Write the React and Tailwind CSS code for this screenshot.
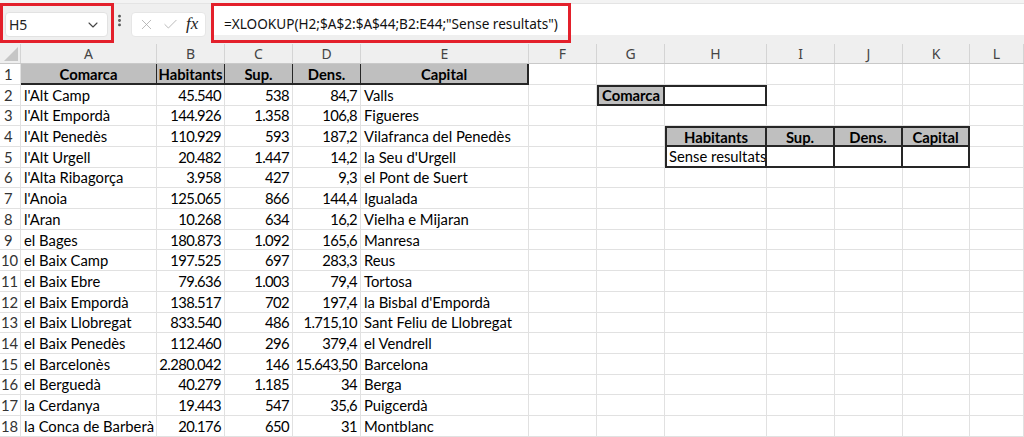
import { X, Check, ChevronDown, EllipsisVertical } from 'lucide-react'

const W = [
  'w-[21px]', 'w-[136px]', 'w-[68px]', 'w-[68px]', 'w-[68px]', 'w-[168px]',
  'w-[68px]', 'w-[68px]', 'w-[102px]', 'w-[68px]', 'w-[68px]', 'w-[67px]', 'w-[54px]',
]
const LETTERS = ['A', 'B', 'C', 'D', 'E', 'F', 'G', 'H', 'I', 'J', 'K', 'L']

const DATA = [
  ["l'Alt Camp", '45.540', '538', '84,7', 'Valls'],
  ["l'Alt Empordà", '144.926', '1.358', '106,8', 'Figueres'],
  ["l'Alt Penedès", '110.929', '593', '187,2', 'Vilafranca del Penedès'],
  ["l'Alt Urgell", '20.482', '1.447', '14,2', "la Seu d'Urgell"],
  ["l'Alta Ribagorça", '3.958', '427', '9,3', 'el Pont de Suert'],
  ["l'Anoia", '125.065', '866', '144,4', 'Igualada'],
  ["l'Aran", '10.268', '634', '16,2', 'Vielha e Mijaran'],
  ['el Bages', '180.873', '1.092', '165,6', 'Manresa'],
  ['el Baix Camp', '197.525', '697', '283,3', 'Reus'],
  ['el Baix Ebre', '79.636', '1.003', '79,4', 'Tortosa'],
  ['el Baix Empordà', '138.517', '702', '197,4', "la Bisbal d'Empordà"],
  ['el Baix Llobregat', '833.540', '486', '1.715,10', 'Sant Feliu de Llobregat'],
  ['el Baix Penedès', '112.460', '296', '379,4', 'el Vendrell'],
  ['el Barcelonès', '2.280.042', '146', '15.643,50', 'Barcelona'],
  ['el Berguedà', '40.279', '1.185', '34', 'Berga'],
  ['la Cerdanya', '19.443', '547', '35,6', 'Puigcerdà'],
  ['la Conca de Barberà', '20.176', '650', '31', 'Montblanc'],
]

const base = 'h-full shrink-0 flex items-center overflow-hidden whitespace-nowrap'
const grid = 'border-r border-b border-[#e1e1e1]'

// cell kinds: plain gridline cells, gray header of A1:E1, boxed cells of the lookup table
const STYLE = {
  plain: `${grid} px-[3px]`,
  num: `${grid} pl-[2px] pr-[3px] justify-end tracking-[-0.6px]`,
  head: 'bg-[#bfbfbf] border-r-[1.5px] border-b-2 border-[#262626] font-bold justify-center',
  headLast: 'bg-[#bfbfbf] border-r-2 border-b-2 border-[#262626] font-bold justify-center',
  boxFirst: 'bg-[#bfbfbf] border-2 border-[#262626] font-bold justify-center',
  boxNext: 'border-y-2 border-r-2 border-[#262626]',
  tHeadFirst: 'bg-[#bfbfbf] border-2 border-[#262626] font-bold justify-center',
  tHead: 'bg-[#bfbfbf] border-y-2 border-r-2 border-[#262626] font-bold justify-center',
  tBodyFirst: 'border-x-2 border-b-2 border-[#262626] px-[2px]',
  tBody: 'border-r-2 border-b-2 border-[#262626]',
}

function buildRow(r) {
  // 12 cells [kind, value] for columns A..L
  const cells = Array.from({ length: 12 }, () => ['plain', ''])
  if (r === 1) {
    ;['Comarca', 'Habitants', 'Sup.', 'Dens.'].forEach((v, i) => (cells[i] = ['head', v]))
    cells[4] = ['headLast', 'Capital']
  } else {
    const d = DATA[r - 2]
    cells[0] = ['plain', d[0]]
    cells[1] = ['num', d[1]]
    cells[2] = ['num', d[2]]
    cells[3] = ['num', d[3]]
    cells[4] = ['plain', d[4]]
  }
  if (r === 2) {
    cells[6] = ['boxFirst', 'Comarca']
    cells[7] = ['boxNext', '']
  }
  if (r === 4) {
    cells[7] = ['tHeadFirst', 'Habitants']
    cells[8] = ['tHead', 'Sup.']
    cells[9] = ['tHead', 'Dens.']
    cells[10] = ['tHead', 'Capital']
  }
  if (r === 5) {
    cells[7] = ['tBodyFirst', 'Sense resultats']
    cells[8] = ['tBody', '']
    cells[9] = ['tBody', '']
    cells[10] = ['tBody', '']
  }
  return cells
}

function FormulaBar() {
  return (
    <div className="h-[43.6px] relative bg-[#efefef] flex flex-col">
      <div className="h-[4px] bg-[#f3f3f3] border-b border-[#e4e4e4]" />
      <div className="flex-1 flex items-start">
        <div className="w-[5px] shrink-0" />
        <div className="mt-[8px] h-[25px] w-[103px] shrink-0 bg-white rounded-[4px] border border-[#e2e2e2] flex items-center justify-between pl-[3px] pr-[6px] text-[14px] text-[#222] font-['Noto_Sans',sans-serif]">
          <span>H5</span>
          <ChevronDown size={16} strokeWidth={1.6} className="text-[#444]" />
        </div>
        <div className="w-[23px] shrink-0 h-[33px] flex items-center justify-center">
          <EllipsisVertical size={15} strokeWidth={2.6} className="text-[#555]" />
        </div>
        <div className="mt-[8px] h-[25px] w-[75px] shrink-0 bg-white rounded-[4px] border border-[#e6e6e6] flex items-center pl-[6px] gap-[7px]">
          <X size={17} strokeWidth={1.1} className="text-[#a8a8a8]" />
          <Check size={17} strokeWidth={1.1} className="text-[#a8a8a8]" />
          <span className="italic text-[17px] leading-none text-[#222] font-['Liberation_Serif',serif] -mt-[2px]">fx</span>
        </div>
        <div className="ml-[6px] flex-1 h-[31px] bg-white flex items-center pt-[9px] pl-[12px] text-[13.6px] text-[#111] font-['Noto_Sans',sans-serif] whitespace-nowrap">
          =XLOOKUP(H2;$A$2:$A$44;B2:E44;"Sense resultats")
        </div>
      </div>
      {/* red annotation frames */}
      <div className="absolute left-0 top-[3px] w-[114px] h-[40px] border-[3px] border-[#e3202b] pointer-events-none" />
      <div className="absolute left-[211px] top-[3px] w-[360px] h-[40px] border-[3px] border-[#e3202b] pointer-events-none" />
    </div>
  )
}

function HeaderRow() {
  return (
    <div className="flex h-[20.7px] bg-[#efefef] border-b border-[#c9c9c9] text-[14px] text-[#444] font-['Noto_Sans',sans-serif]">
      <div className={`${W[0]} h-full shrink-0 border-r border-[#d4d4d4] flex items-end justify-end pr-[2px] pb-[2px]`}>
        <svg width="14" height="14" viewBox="0 0 14 14">
          <polygon points="14,0 14,14 0,14" fill="#c6c6c6" />
        </svg>
      </div>
      {LETTERS.map((l, i) => (
        <div key={l} className={`${W[i + 1]} h-full shrink-0 border-r border-[#d4d4d4] flex items-center justify-center`}>
          {l}
        </div>
      ))}
    </div>
  )
}

export default function App() {
  return (
    <div className="w-[1024px] h-[437px] overflow-hidden bg-white">
      <FormulaBar />
      <HeaderRow />
      {Array.from({ length: 18 }, (_, k) => k + 1).map((r) => (
        <div key={r} className="flex h-[20.7px] text-[14.8px] text-black font-['Lato',sans-serif]">
          <div className={`${W[0]} ${base} border-r border-b border-[#e1e1e1] text-[#333] ${r < 10 ? 'pl-[4px]' : 'pl-[1px]'}`}>
            {r}
          </div>
          {buildRow(r).map(([kind, v], i) => (
            <div key={i} className={`${W[i + 1]} ${base} ${STYLE[kind]}`}>
              {v}
            </div>
          ))}
        </div>
      ))}
    </div>
  )
}
